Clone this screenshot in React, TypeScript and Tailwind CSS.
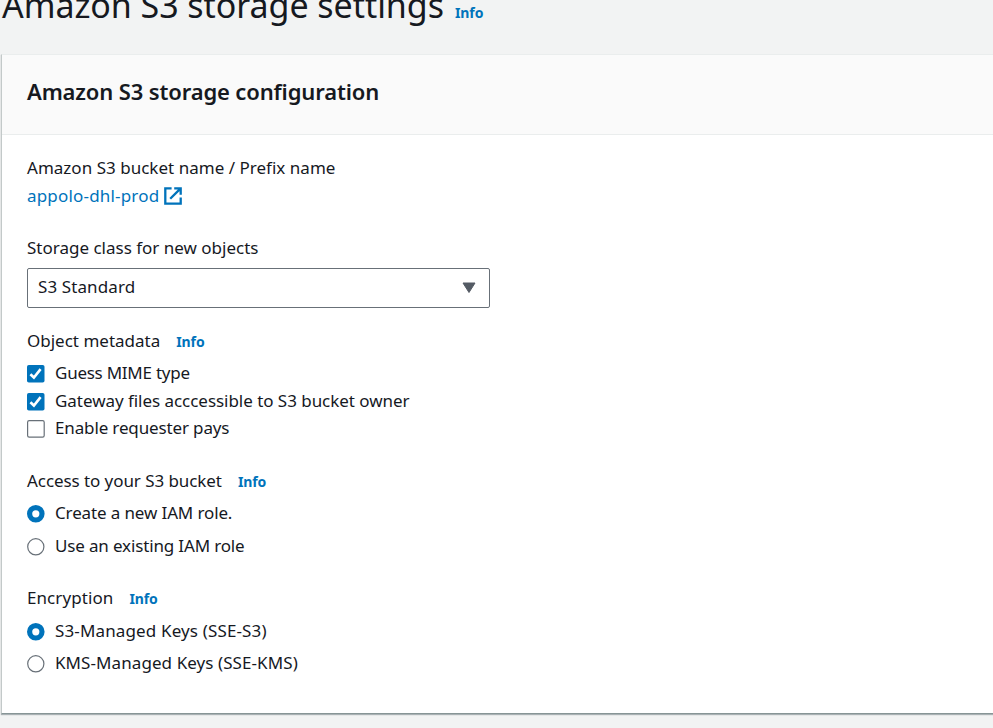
import React from 'react';

function Info({ className }: { className: string }) {
  return <a className={`whitespace-nowrap text-[14px] font-bold leading-[28px] tracking-[-0.1px] text-[#0073bb] ${className}`}>Info</a>;
}

function Label({ text, textClass, info }: { text: string; textClass: string; info?: boolean }) {
  return (
    <div className="flex h-7">
      <span className={`whitespace-nowrap leading-7 ${textClass}`}>{text}</span>
      {info && <Info className="ml-4 pt-px" />}
    </div>
  );
}

function Checkbox({ checked }: { checked?: boolean }) {
  return (
    <svg className="mt-[6px] shrink-0" width="18" height="18" viewBox="0 0 18 18" fill="none">
      {checked ? (
        <>
          <rect width="17.5" height="17.5" rx="1.8" fill="#0073bb" />
          <path d="M3.4 9.2l3.5 3.3 6.7-8.4" stroke="#fff" strokeWidth="2.6" />
        </>
      ) : (
        <rect x=".6" y=".6" width="16.6" height="16.6" rx="1.6" fill="#fff" stroke="#687078" strokeWidth="1.2" />
      )}
    </svg>
  );
}

function Radio({ checked }: { checked?: boolean }) {
  return (
    <svg className="mt-[6px] shrink-0" width="18" height="18" viewBox="0 0 18 18" fill="none">
      {checked ? (
        <circle cx="8.8" cy="8.8" r="6.2" fill="#fff" stroke="#0073bb" strokeWidth="5.2" />
      ) : (
        <circle cx="8.8" cy="8.8" r="8.1" fill="#fff" stroke="#687078" strokeWidth="1.2" />
      )}
    </svg>
  );
}

function Option({ text, textClass, className, children }: { text: string; textClass: string; className: string; children: React.ReactNode }) {
  return (
    <label className={`flex h-7 gap-[10px] ${className}`}>
      {children}
      <span className={`whitespace-nowrap leading-7 ${textClass}`}>{text}</span>
    </label>
  );
}

export default function App() {
  return (
    <div className="h-[728px] w-[993px] overflow-hidden bg-[#f2f3f3] font-['Noto_Sans',sans-serif] text-[17px] text-[#16191f]">
      <header className="flex h-[54px] pl-[2px]">
        <h1 className="-mt-[19px] w-[441px] whitespace-nowrap text-[34px] leading-[48px] tracking-[-0.06px]">Amazon S3 storage settings</h1>
        <Info className="-mt-px ml-[12px]" />
      </header>
      <main className="ml-px h-[660px] border-b border-l border-t border-b-[#879596] border-l-[#c3c9c9] border-t-[#eaeded] bg-white shadow-[0_1px_1px_0_rgba(0,28,36,0.3)]">
        <div className="h-20 border-b border-[#eaeded] bg-[#fafafa] pl-[25px] pt-[20px]">
          <h2 className="whitespace-nowrap text-[22px] font-semibold leading-8 tracking-[-0.14px]">Amazon S3 storage configuration</h2>
        </div>
        <div className="flex flex-col pl-[25px] pt-[19px]">
          <Label text="Amazon S3 bucket name / Prefix name" textClass="tracking-[0.02px]" />
          <a className="flex h-7 gap-[5px] text-[#0073bb]">
            <span className="whitespace-nowrap leading-7 tracking-[0.18px]">appolo-dhl-prod</span>
            <svg className="mt-[5px]" width="18" height="18" viewBox="0 0 18 18" fill="none" stroke="currentColor" strokeWidth="2.3">
              <path d="M7.6 1.3H1.3v15.4h15.4v-6.3M10.2 1.3h6.5v6.4M16.4 1.6L6.2 11.8" />
            </svg>
          </a>
          <div className="mt-6">
            <Label text="Storage class for new objects" textClass="" />
          </div>
          <div className="mt-[6px] flex h-10 w-[463px] justify-between rounded-[2px] border border-[#687078] pl-[10px] pr-[13px]">
            <span className="whitespace-nowrap leading-9 tracking-[0.1px]">S3 Standard</span>
            <svg className="mt-[13px]" width="14" height="12" viewBox="0 0 14 12" fill="#545b64" stroke="#545b64" strokeLinejoin="round">
              <path d="M1 1h12L7 10.5z" />
            </svg>
          </div>
          <div className="mt-[19px]">
            <Label text="Object metadata" textClass="" info />
          </div>
          <Option text="Guess MIME type" textClass="tracking-[-0.25px]" className="mt-1"><Checkbox checked /></Option>
          <Option text="Gateway files acccessible to S3 bucket owner" textClass="tracking-[-0.04px]" className=""><Checkbox checked /></Option>
          <Option text="Enable requester pays" textClass="tracking-[-0.14px]" className="-mt-px"><Checkbox /></Option>
          <div className="mt-[25px]">
            <Label text="Access to your S3 bucket" textClass="tracking-[-0.07px]" info />
          </div>
          <Option text="Create a new IAM role." textClass="tracking-[-0.13px]" className="mt-1"><Radio checked /></Option>
          <Option text="Use an existing IAM role" textClass="tracking-[-0.15px]" className="mt-[5px]"><Radio /></Option>
          <div className="mt-6">
            <Label text="Encryption" textClass="tracking-[0.08px]" info />
          </div>
          <Option text="S3-Managed Keys (SSE-S3)" textClass="tracking-[0.14px]" className="mt-[5px]"><Radio checked /></Option>
          <Option text="KMS-Managed Keys (SSE-KMS)" textClass="tracking-[0.08px]" className="mt-1"><Radio /></Option>
        </div>
      </main>
    </div>
  );
}
